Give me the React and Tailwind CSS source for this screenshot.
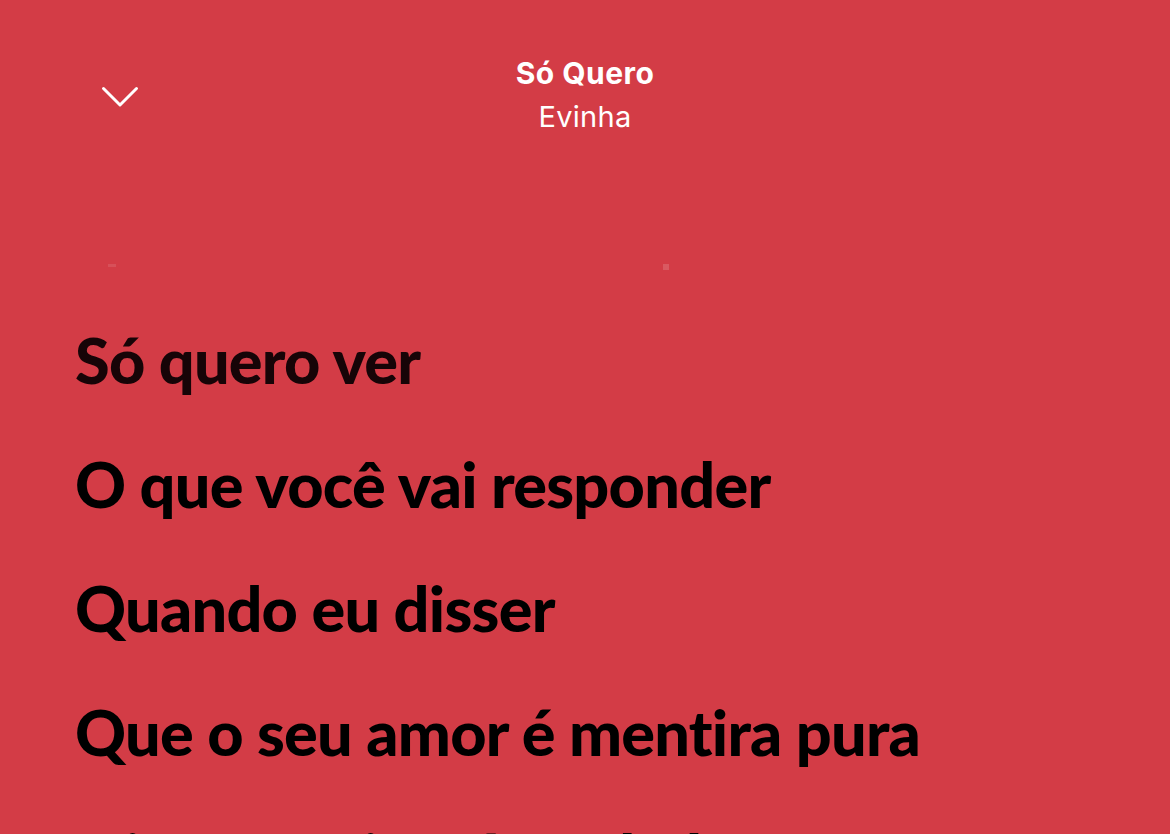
const lyrics = [
  'Só quero ver',
  'O que você vai responder',
  'Quando eu disser',
  'Que o seu amor é mentira pura',
  'E já não sei se é verdade',
];

export default function App() {
  return (
    <div className="relative h-[834px] w-[1170px] overflow-hidden bg-[#d33c46] font-['Lato','Liberation_Sans',sans-serif]">
      {/* Header */}
      <header className="grid grid-cols-[1fr_auto_1fr] items-center pt-[55px]">
        <div className="pl-[101px] pt-[4px]">
          <button className="block text-white">
            <svg width="38" height="22" viewBox="0 0 38 22" fill="none">
              <polyline points="2.5,2.5 19,19 35.5,2.5" stroke="currentColor" strokeWidth="3" strokeLinecap="round" strokeLinejoin="round" />
            </svg>
          </button>
        </div>
        <div className="flex flex-col items-center font-['Inter','Liberation_Sans',sans-serif] text-white">
          <h1 className="text-[30px] leading-[36px] font-bold tracking-[0.015em]">Só Quero</h1>
          <p className="mt-[8px] text-[29px] leading-[36px] tracking-[0.01em]">Evinha</p>
        </div>
        <div />
      </header>

      {/* faint specks */}
      <span className="absolute left-[108px] top-[264px] h-[3px] w-[8px] bg-white/10" />
      <span className="absolute left-[663px] top-[264px] h-[6px] w-[6px] bg-white/15" />

      {/* Lyrics */}
      <main className="mt-[163px] px-[75px]">
        {lyrics.map((line, i) => (
          <p
            key={i}
            className={`text-[63px] leading-[124px] font-black tracking-[-0.012em] whitespace-nowrap ${
              i === 0 ? 'text-[#170407]' : 'text-black'
            }`}
          >
            {line}
          </p>
        ))}
      </main>
    </div>
  );
}
